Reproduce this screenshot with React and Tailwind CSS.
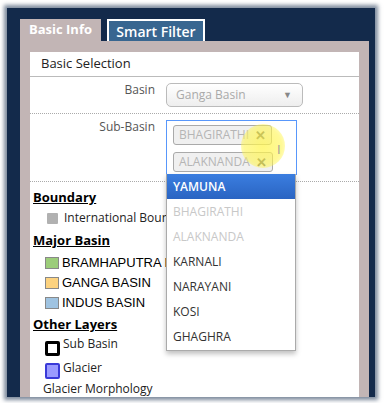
import React from 'react'

const SEGOE = { fontFamily: '"Open Sans", "Noto Sans", sans-serif' }
const ARIAL = { fontFamily: '"Liberation Sans", Arial, sans-serif' }

const OPTIONS = [
  { name: 'YAMUNA', state: 'active' },
  { name: 'BHAGIRATHI', state: 'disabled' },
  { name: 'ALAKNANDA', state: 'disabled' },
  { name: 'KARNALI' },
  { name: 'NARAYANI' },
  { name: 'KOSI' },
  { name: 'GHAGHRA' },
]

function Tag({ label }) {
  return (
    <div className="flex h-[20px] items-center gap-[6px] self-start rounded-[3px] border border-[#aaa] bg-[#f0f0f0] px-[5px] text-[12px] leading-none text-[#b5b5b5]">
      <span>{label}</span>
      <span className="text-[13px] font-bold text-[#666]">✕</span>
    </div>
  )
}

function Swatch({ className }) {
  return <div className={`h-[12px] w-[14px] shrink-0 border border-[#888] ${className}`} />
}

export default function App() {
  return (
    <div className="relative h-[403px] w-[385px] overflow-hidden bg-white" style={SEGOE}>
      {/* navy frame */}
      <div className="ml-[7px] mt-[8px] h-[389px] w-[368px] overflow-hidden bg-[#132a4b] pl-[13px] pr-[6px] pt-[11px] shadow-[0_0_4px_3px_rgba(19,42,75,0.55)]">
        {/* tabs */}
        <div className="flex h-[22px] items-end gap-[6px]">
          <div className="flex h-[22px] w-[81px] items-center justify-center bg-[#c2b5b5] text-[13px] font-bold text-white">
            Basic Info
          </div>
          <div className="flex h-[22px] w-[98px] items-center justify-center border-2 border-b-0 border-white bg-[#386690] text-[14px] font-semibold text-white">
            Smart Filter
          </div>
        </div>

        {/* pink panel */}
        <div className="h-[400px] bg-[#c2b5b5] px-[10px] pt-[11px]">
          <div className="h-[400px] bg-white">
            <div className="flex h-[25px] items-center border-b border-[#bbb] pl-[11px] text-[13px] text-[#222]">
              Basic Selection
            </div>

            {/* Basin row */}
            <div className="flex border-b border-dotted border-[#aaa] py-[6px]">
              <div className="-mt-[2px] w-[125px] text-right text-[12px] text-[#555]">Basin</div>
              <div className="ml-[11px] flex h-[24px] w-[137px] items-center justify-between rounded-[5px] border border-[#bbb] bg-gradient-to-b from-white to-[#eee] pl-[9px] pr-[10px] text-[12px] text-[#aaa]">
                <span>Ganga Basin</span>
                <span className="text-[9px] text-[#888]">▼</span>
              </div>
            </div>

            {/* Sub-Basin row */}
            <div className="flex border-b border-dotted border-[#aaa] py-[6px]">
              <div className="-mt-[2px] w-[125px] text-right text-[12px] text-[#555]">Sub-Basin</div>
              <div className="ml-[11px] flex h-[55px] w-[131px] flex-col gap-[7px] border border-[#5897fb] bg-white pl-[6px] pt-[4px]">
                <Tag label="BHAGIRATHI" />
                <Tag label="ALAKNANDA" />
              </div>
            </div>

            {/* legend, cut off where the open list lies over it */}
            <div className="w-[136px] overflow-hidden pl-[3px] pt-[5px]">
              <div className="text-[13px] font-bold leading-[20px] text-black underline">Boundary</div>
              <div className="flex h-[22px] items-center gap-[6px] pl-[14px]">
                <div className="h-[11px] w-[11px] shrink-0 rounded-[1px] bg-[#b1b1b1]" />
                <span className="whitespace-nowrap text-[12px] text-[#222]">International Boundary</span>
              </div>
              <div className="mt-[1px] text-[13px] font-bold leading-[20px] text-black underline">Major Basin</div>
              <div className="flex flex-col pl-[12px] pt-[3px] text-[13px] text-black" style={ARIAL}>
                <div className="flex h-[20px] items-center gap-[3px]">
                  <Swatch className="bg-[#9ccd7a]" />
                  <span className="whitespace-nowrap">BRAMHAPUTRA BASIN</span>
                </div>
                <div className="flex h-[20px] items-center gap-[3px]">
                  <Swatch className="bg-[#fcd27f]" />
                  <span className="whitespace-nowrap">GANGA BASIN</span>
                </div>
                <div className="flex h-[20px] items-center gap-[3px]">
                  <Swatch className="bg-[#9fc3e1]" />
                  <span className="whitespace-nowrap">INDUS BASIN</span>
                </div>
              </div>
              <div className="mt-[1px] text-[13px] font-bold leading-[20px] text-black underline">Other Layers</div>
              <div className="flex h-[23px] items-start gap-[3px] pl-[12px] pt-[1px]">
                <div className="mt-[6px] h-[15px] w-[15px] shrink-0 rounded-[2px] border-[3px] border-black bg-white" />
                <span className="text-[12px] text-[#222]">Sub Basin</span>
              </div>
              <div className="flex h-[22px] items-start gap-[3px] pl-[12px] pt-[2px]">
                <div className="mt-[4px] h-[16px] w-[15px] shrink-0 rounded-[2px] border-2 border-[#3a3ad8] bg-[#9b9bff]" />
                <span className="text-[12px] text-[#222]">Glacier</span>
              </div>
              <div className="whitespace-nowrap pl-[10px] pt-[1px] text-[12px] leading-[17px] text-[#222]">Glacier Morphology</div>
            </div>
          </div>
        </div>
      </div>

      {/* open list of the Sub-Basin select */}
      <div className="absolute left-[166px] top-[174px] w-[130px] border border-t-0 border-[#aaa] bg-white pb-[1px] shadow-[0_3px_5px_rgba(0,0,0,0.25)]">
        {OPTIONS.map(o => (
          <div
            key={o.name}
            className={
              o.state === 'active'
                ? 'flex h-[25px] items-center bg-gradient-to-b from-[#3b7ee0] to-[#2a64c2] pl-[6px] text-[12px] font-semibold text-white'
                : o.state === 'disabled'
                ? 'flex h-[25px] items-center pl-[6px] text-[12px] text-[#c8c8c8]'
                : 'flex h-[25px] items-center pl-[6px] text-[12px] text-[#333]'
            }
          >
            {o.name}
          </div>
        ))}
      </div>

      {/* cursor highlight */}
      <div className="pointer-events-none absolute left-[241px] top-[124px] h-[44px] w-[44px] rounded-full bg-[radial-gradient(circle,rgba(255,245,80,0.75)_0%,rgba(255,245,80,0.6)_60%,rgba(255,245,80,0)_100%)]" />
      <div className="pointer-events-none absolute left-[277px] top-[141px] h-[16px] w-[6px] text-[13px] leading-[16px] text-[#999]">I</div>
    </div>
  )
}
